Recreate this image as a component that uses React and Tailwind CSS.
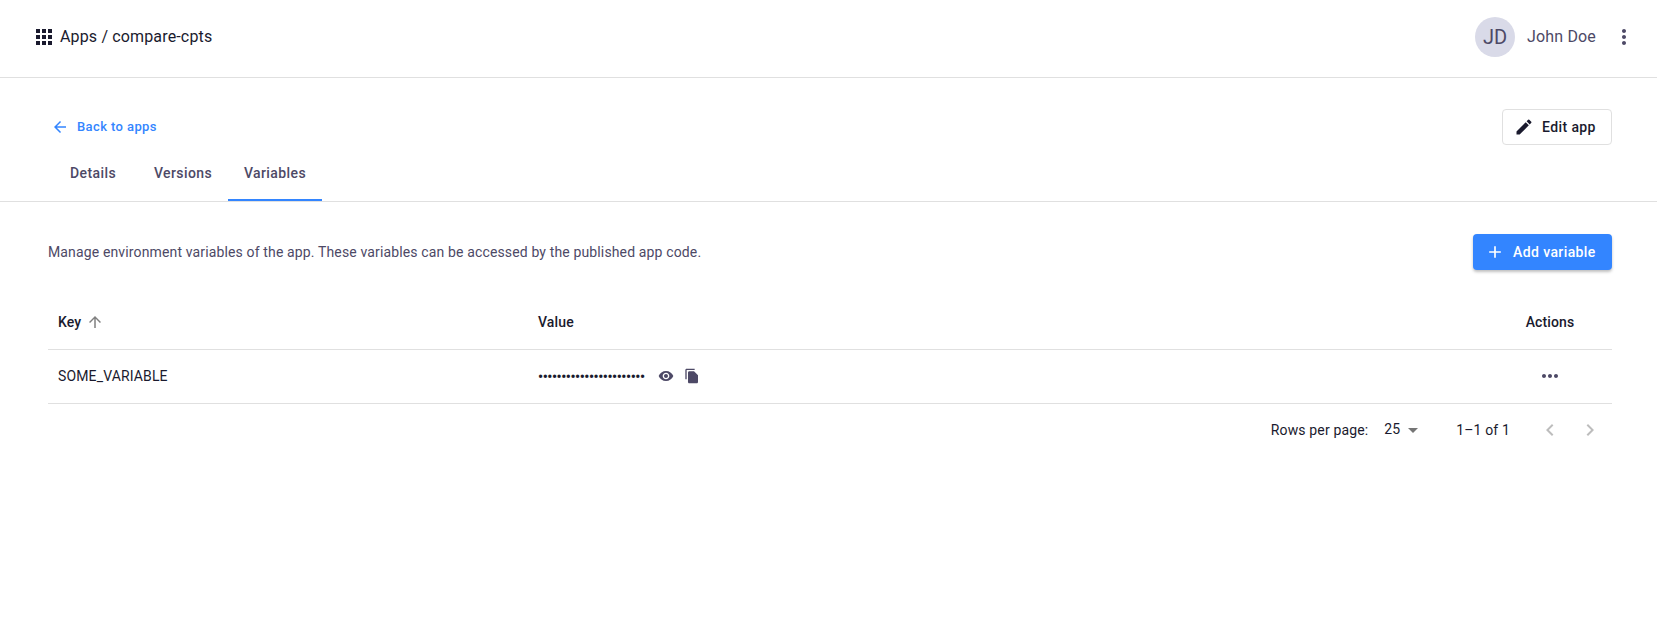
const P = {
  apps: "M4 8h4V4H4v4zm6 12h4v-4h-4v4zm-6 0h4v-4H4v4zm0-6h4v-4H4v4zm6 0h4v-4h-4v4zm6-10v4h4V4h-4zm-6 4h4V4h-4v4zm6 6h4v-4h-4v4zm0 6h4v-4h-4v4z",
  back: "M20 11H7.83l5.59-5.59L12 4l-8 8 8 8 1.41-1.41L7.83 13H20v-2z",
  edit: "M3 17.25V21h3.75L17.81 9.94l-3.75-3.75L3 17.25zM20.71 7.04c.39-.39.39-1.02 0-1.41l-2.34-2.34a.9959.9959 0 0 0-1.41 0l-1.83 1.83 3.75 3.75 1.83-1.83z",
  add: "M19 13h-6v6h-2v-6H5v-2h6V5h2v6h6v2z",
  vert: "M12 8c1.1 0 2-.9 2-2s-.9-2-2-2-2 .9-2 2 .9 2 2 2zm0 2c-1.1 0-2 .9-2 2s.9 2 2 2 2-.9 2-2-.9-2-2-2zm0 6c-1.1 0-2 .9-2 2s.9 2 2 2 2-.9 2-2-.9-2-2-2z",
  horiz: "M6 10c-1.1 0-2 .9-2 2s.9 2 2 2 2-.9 2-2-.9-2-2-2zm12 0c-1.1 0-2 .9-2 2s.9 2 2 2 2-.9 2-2-.9-2-2-2zm-6 0c-1.1 0-2 .9-2 2s.9 2 2 2 2-.9 2-2-.9-2-2-2z",
  eye: "M12 4.5C7 4.5 2.73 7.61 1 12c1.73 4.39 6 7.5 11 7.5s9.27-3.11 11-7.5c-1.73-4.39-6-7.5-11-7.5zM12 17c-2.76 0-5-2.24-5-5s2.24-5 5-5 5 2.24 5 5-2.24 5-5 5zm0-8c-1.66 0-3 1.34-3 3s1.34 3 3 3 3-1.34 3-3-1.34-3-3-3z",
  copy: "M16 1H4c-1.1 0-2 .9-2 2v14h2V3h12V1zm-1 4H8c-1.1 0-1.99.9-1.99 2L6 21c0 1.1.89 2 1.99 2H19c1.1 0 2-.9 2-2V11l-6-6z",
  up: "M4 12l1.41 1.41L11 7.83V20h2V7.83l5.58 5.59L20 12l-8-8-8 8z",
  left: "M15.41 7.41 14 6l-6 6 6 6 1.41-1.41L10.83 12z",
  right: "M10 6 8.59 7.41 13.17 12l-4.58 4.59L10 18l6-6z",
  drop: "M7 10l5 5 5-5z",
};

function Icon({ d, className }) {
  return (
    <svg viewBox="0 0 24 24" fill="currentColor" className={className} aria-hidden="true">
      <path d={d} />
    </svg>
  );
}

export default function App() {
  return (
    <div className="min-h-[619px] bg-white font-['Roboto',sans-serif] text-[#1a1a2e]">
      <header className="flex h-[78px] items-center justify-between border-b border-[#e0e0e0] pb-1 pl-8 pr-[13px]">
        <div className="flex items-center gap-1">
          <Icon d={P.apps} className="h-6 w-6" />
          <span className="text-base tracking-[0.15px]">Apps / compare-cpts</span>
        </div>
        <div className="flex items-center">
          <div className="flex h-10 w-10 items-center justify-center rounded-full bg-[#d9dae8] text-xl text-[#4d4966]">JD</div>
          <span className="ml-3 text-base tracking-[0.15px] text-[#4d4966]">John Doe</span>
          <div className="ml-2 flex h-10 w-10 items-center justify-center text-[#4d4966]">
            <Icon d={P.vert} className="h-6 w-6" />
          </div>
        </div>
      </header>

      <div className="flex items-center justify-between pl-[51px] pr-[45px] pt-[31px]">
        <div className="flex items-center gap-2 text-[#3385ff]">
          <Icon d={P.back} className="h-[18px] w-[18px]" />
          <span className="text-[13px] font-medium tracking-[0.4px]">Back to apps</span>
        </div>
        <div className="flex h-9 w-[110px] items-center gap-2 rounded border border-[#e0e0e0] pl-[11px] text-sm font-medium tracking-[0.4px]">
          <Icon d={P.edit} className="h-5 w-5" />
          <span>Edit app</span>
        </div>
      </div>

      <nav className="mt-2 flex h-[49px] border-b border-[#e0e0e0] pl-12 text-sm font-medium tracking-[0.4px] text-[#4d4966]">
        <div className="flex h-12 w-[90px] items-center justify-center border-b-2 border-transparent pb-[6px]">Details</div>
        <div className="flex h-12 w-[90px] items-center justify-center border-b-2 border-transparent pb-[6px]">Versions</div>
        <div className="flex h-12 w-[94px] items-center justify-center border-b-2 border-[#3385ff] pb-[6px]">Variables</div>
      </nav>

      <main className="pl-12 pr-[45px] pt-8">
        <div className="flex items-center justify-between">
          <p className="text-sm tracking-[0.14px] text-[#4d4966]">Manage environment variables of the app. These variables can be accessed by the published app code.</p>
          <div className="flex h-9 w-[139px] items-center gap-2 rounded bg-[#3385ff] pl-3 text-sm font-medium tracking-[0.4px] text-white shadow-[0_2px_3px_rgba(0,0,0,0.25)]">
            <Icon d={P.add} className="h-5 w-5" />
            <span>Add variable</span>
          </div>
        </div>

        <div className="mt-[23px] flex h-[57px] items-center border-b border-[#e0e0e0] pt-[2px] text-sm font-medium tracking-[0.14px]">
          <div className="flex w-[480px] items-center gap-[5px] pl-[10px]">
            <span>Key</span>
            <Icon d={P.up} className="h-[18px] w-[18px] text-[#808080]" />
          </div>
          <div className="flex-1 pl-[10px]">Value</div>
          <div className="w-[124px] text-center">Actions</div>
        </div>

        <div className="flex h-[54px] items-center border-b border-[#e0e0e0] pb-[2px] text-sm tracking-[0.14px]">
          <div className="w-[480px] pl-[10px]">SOME_VARIABLE</div>
          <div className="flex flex-1 items-center pl-[10px]">
            <span className="mt-[2px] whitespace-nowrap font-bold tracking-[-0.4px]">•••••••••••••••••••••••</span>
            <Icon d={P.eye} className="ml-[13px] h-4 w-4 text-[#4d4966]" />
            <Icon d={P.copy} className="ml-[10px] h-4 w-4 text-[#4d4966]" />
          </div>
          <div className="flex w-[124px] justify-center text-[#4d4966]">
            <Icon d={P.horiz} className="h-6 w-6" />
          </div>
        </div>

        <div className="flex h-[52px] items-center justify-end text-sm tracking-[0.14px]">
          <span>Rows per page:</span>
          <span className="mb-[2px] ml-4">25</span>
          <Icon d={P.drop} className="ml-[1px] h-6 w-6 text-[#757575]" />
          <span className="ml-[31px]">1–1 of 1</span>
          <Icon d={P.left} className="ml-[28px] h-6 w-6 text-[#bdbdbd]" />
          <Icon d={P.right} className="ml-4 mr-[10px] h-6 w-6 text-[#bdbdbd]" />
        </div>
      </main>
    </div>
  );
}
